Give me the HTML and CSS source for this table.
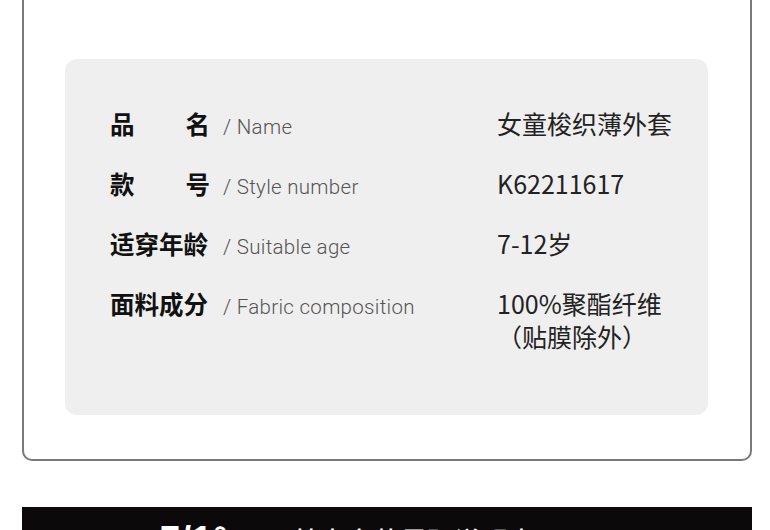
FILE: index.html
```html
<!DOCTYPE html>
<html lang="zh">
<head>
<meta charset="utf-8">
<title>产品信息</title>
<link rel="stylesheet" href="styles.css">
</head>
<body>
<div class="frame">
  <div class="card">
    <div class="row">
      <div class="key"><span class="cn"><span>品</span><span>名</span></span><span class="en">/ Name</span></div>
      <div class="val">女童梭织薄外套</div>
    </div>
    <div class="row">
      <div class="key"><span class="cn"><span>款</span><span>号</span></span><span class="en">/ Style number</span></div>
      <div class="val">K62211617</div>
    </div>
    <div class="row">
      <div class="key"><span class="cn"><span>适穿年龄</span></span><span class="en">/ Suitable age</span></div>
      <div class="val">7-12岁</div>
    </div>
    <div class="row">
      <div class="key"><span class="cn"><span>面料成分</span></span><span class="en">/ Fabric composition</span></div>
      <div class="val">100%聚酯纤维<br>（贴膜除外）</div>
    </div>
  </div>
</div>
<div class="banner">
  <span class="logo">7/1°</span>
  <span class="title">基本衣装尺码说明表</span>
</div>
</body>
</html>
```

FILE: styles.css
```css
html, body {
  margin: 0;
  padding: 0;
  background: #ffffff;
}
body {
  font-family: "Noto Sans CJK SC", "Noto Sans", sans-serif;
  overflow: hidden;
}
.frame {
  box-sizing: border-box;
  width: 730px;
  margin: -10px 0 0 22px;
  padding: 67px 42px 44px 41px;
  border: 2px solid #7a7a7a;
  border-radius: 0 0 10px 10px;
}
.card {
  background: #efefef;
  border-radius: 12px;
  padding: 48px 30px 62px 45px;
}
.row {
  display: flex;
  align-items: flex-start;
  line-height: 33px;
}
.row + .row {
  margin-top: 27px;
}
.key {
  width: 387px;
  height: 33px;
  display: flex;
  align-items: baseline;
  flex-shrink: 0;
}
.cn {
  width: 100px;
  display: flex;
  justify-content: space-between;
  font-size: 24.5px;
  line-height: 33px;
  font-weight: 700;
  color: #111111;
}
.en {
  margin-left: 13px;
  font-family: "Roboto", "Liberation Sans", sans-serif;
  font-weight: 300;
  font-size: 20.5px;
  line-height: 33px;
  letter-spacing: 0.3px;
  color: #555555;
}
.val {
  font-size: 25px;
  color: #222222;
}
.banner {
  box-sizing: border-box;
  width: 730px;
  height: 60px;
  margin: 46px 0 0 22px;
  background: #0b0909;
  color: #ffffff;
  display: flex;
  align-items: flex-start;
  padding: 15px 0 0 138px;
}
.logo {
  font-family: "Liberation Sans", sans-serif;
  font-weight: 700;
  font-size: 36px;
  line-height: 36px;
  letter-spacing: 1px;
}
.title {
  margin-left: 64px;
  font-size: 26px;
  line-height: 36px;
  font-weight: 500;
  letter-spacing: 1px;
}
```
